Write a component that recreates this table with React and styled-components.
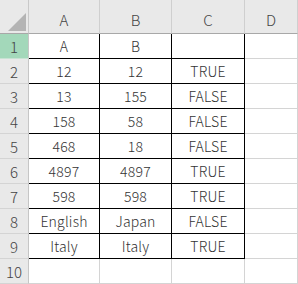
import React from 'react'
import styled, { createGlobalStyle } from 'styled-components'

const GlobalStyle = createGlobalStyle`
  html, body {
    margin: 0;
    padding: 0;
    background: #ffffff;
  }
  body {
    font-family: "Noto Sans CJK JP", "Noto Sans", sans-serif;
  }
`

const Sheet = styled.div`
  display: grid;
  grid-template-columns: 29px 71px 72px 73px 53px;
  grid-template-rows: 34px repeat(10, 25px);
  width: 298px;
  height: 284px;
  overflow: hidden;
  background: #ffffff;
`

const Corner = styled.div`
  position: relative;
  background: #e9e9e9;
  border-right: 1px solid #c9c9c9;
  border-bottom: 1px solid #a8a8a8;
  box-sizing: border-box;
`

const Triangle = styled.svg`
  position: absolute;
  left: 0;
  top: 0;
`

const ColHead = styled.div`
  display: flex;
  align-items: center;
  justify-content: center;
  padding-top: 6px;
  box-sizing: border-box;
  background: #e9e9e9;
  border-right: 1px solid #cfcfcf;
  border-bottom: 1px solid #a8a8a8;
  color: #444;
  font-size: 15px;
  font-weight: 300;
`

const RowHead = styled.div`
  display: flex;
  align-items: center;
  justify-content: center;
  box-sizing: border-box;
  background: ${p => (p.$active ? '#a3d8ba' : '#e9e9e9')};
  border-right: 1px solid #c6c6c6;
  border-bottom: 1px solid ${p => (p.$active ? '#c7e3d3' : '#d4d4d4')};
  color: #444;
  font-size: 15px;
  font-weight: 300;
`

const Cell = styled.div`
  display: flex;
  align-items: center;
  justify-content: center;
  box-sizing: border-box;
  border-right: 1px solid ${p => (p.$boxed ? '#000' : '#d4d4d4')};
  border-bottom: 1px solid ${p => (p.$boxed ? '#000' : '#d4d4d4')};
  color: #333;
  font-size: 14px;
  font-weight: 300;
  letter-spacing: 0.2px;
  white-space: nowrap;
`

const rows = [
  ['A', 'B', ''],
  ['12', '12', 'TRUE'],
  ['13', '155', 'FALSE'],
  ['158', '58', 'FALSE'],
  ['468', '18', 'FALSE'],
  ['4897', '4897', 'TRUE'],
  ['598', '598', 'TRUE'],
  ['English', 'Japan', 'FALSE'],
  ['Italy', 'Italy', 'TRUE'],
]

const App = () => {
  return (
    <>
      <GlobalStyle />
      <Sheet>
        <Corner>
          <Triangle width="29" height="34" viewBox="0 0 29 34">
            <polygon points="26,13 26,31 8,31" fill="#b4b4b4" />
          </Triangle>
        </Corner>
        {['A', 'B', 'C', 'D'].map(c => (
          <ColHead key={c}>{c}</ColHead>
        ))}
        {rows.map((r, i) => (
          <React.Fragment key={i}>
            <RowHead $active={i === 0}>{i + 1}</RowHead>
            {r.map((v, j) => (
              <Cell key={j} $boxed>{v}</Cell>
            ))}
            <Cell />
          </React.Fragment>
        ))}
        <RowHead>10</RowHead>
        <Cell />
        <Cell />
        <Cell />
        <Cell />
      </Sheet>
    </>
  )
}

export default App
